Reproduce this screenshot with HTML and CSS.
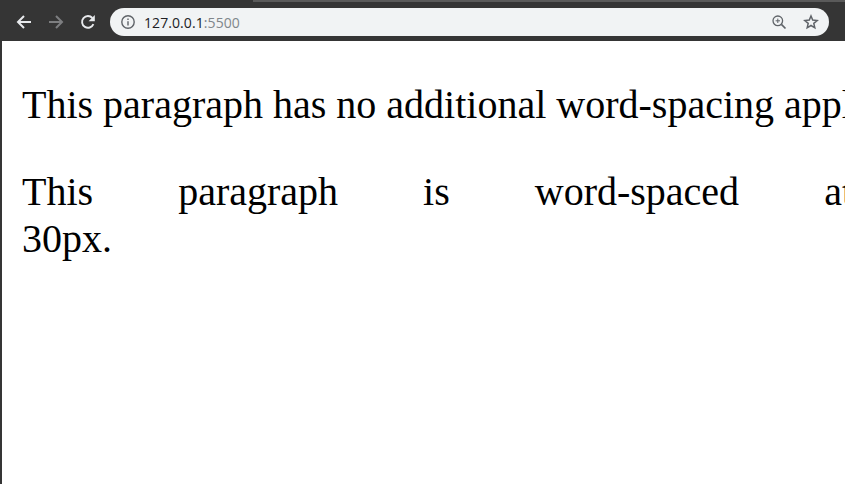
FILE: index.html
```html
<!DOCTYPE html>
<html>
  <head>
    <meta charset="UTF-8">
    <title>word-spacing</title>
    <link rel="stylesheet" href="styles.css">
  </head>
  <body>
    <div class="tab-strip"><div class="tab-edge"></div></div>
    <div class="toolbar">
      <!-- back -->
      <svg class="nav-icon" width="16" height="16" viewBox="0 0 16 16"><path d="M15 8H2M8 2L2 8L8 14" fill="none" stroke="#e8eaed" stroke-width="2"/></svg>
      <!-- forward -->
      <svg class="nav-icon" width="16" height="16" viewBox="0 0 16 16"><path d="M1 8H14M8 2L14 8L8 14" fill="none" stroke="#7d7e80" stroke-width="2"/></svg>
      <!-- reload -->
      <svg class="nav-icon" width="16" height="16" viewBox="0 0 16 16"><path d="M13.4 10.2A5.9 5.9 0 1 1 12.4 4" fill="none" stroke="#e8eaed" stroke-width="1.9"/><path d="M14.8 1V7.2H8.6Z" fill="#e8eaed"/></svg>
      <div class="omnibox">
        <svg class="info-icon" width="14" height="14" viewBox="0 0 14 14"><circle cx="7" cy="7" r="6.2" fill="none" stroke="#5f6368" stroke-width="1.4"/><path d="M7 6.2V10.4M7 3.6V5.1" stroke="#5f6368" stroke-width="1.4"/></svg>
        <span class="host">127.0.0.1</span><span class="port">:5500</span>
        <svg class="zoom-icon" width="16" height="16" viewBox="0 0 16 16"><circle cx="6.8" cy="6.8" r="4.8" fill="none" stroke="#5f6368" stroke-width="1.3"/><path d="M10.4 10.4L14.5 14.5" stroke="#5f6368" stroke-width="1.7"/><path d="M4.6 6.8H9M6.8 4.6V9" stroke="#5f6368" stroke-width="1"/></svg>
        <svg class="star-icon" width="16" height="16" viewBox="0 0 16 16"><path d="M8 2L9.7 6.1L14.2 6.5L10.8 9.4L11.8 13.8L8 11.5L4.2 13.8L5.2 9.4L1.8 6.5L6.3 6.1Z" fill="none" stroke="#5f6368" stroke-width="1.5"/></svg>
      </div>
    </div>
    <div class="page">
      <p class="plain">This paragraph has no additional word-spacing applied.</p>
      <p class="spaced">This paragraph is word-spaced at 30px.</p>
    </div>
  </body>
</html>
```

FILE: styles.css
```css
html, body {
  margin: 0;
  height: 100%;
  overflow: hidden;
}
body {
  display: flex;
  flex-direction: column;
  background: #fff;
  font-family: "Liberation Serif", serif;
  border-left: 2px solid #353535;
  box-sizing: border-box;
}
.tab-strip {
  height: 3px;
  margin-left: -2px;
  background: #353535;
  display: flex;
  justify-content: flex-end;
}
.tab-edge {
  width: 592px;
  height: 2px;
  background: #5a5a5a;
}
.toolbar {
  height: 38px;
  margin-left: -2px;
  background: #353535;
  display: flex;
  align-items: center;
  padding: 0 16px 0 16px;
  gap: 16px;
  box-sizing: border-box;
}
.nav-icon {
  flex: none;
}
.omnibox {
  flex: 1;
  height: 28px;
  margin-left: -2px;
  border-radius: 14px;
  background: #f1f3f4;
  display: flex;
  align-items: center;
  padding: 0 10px 0 11px;
  font-family: "Open Sans", sans-serif;
  font-size: 14px;
  letter-spacing: 0.08px;
}
.info-icon {
  margin-right: 9px;
}
.host {
  color: #202124;
}
.port {
  color: #80868b;
}
.zoom-icon {
  margin-left: auto;
  margin-right: 16px;
}
.page {
  flex: 1;
  padding: 0 20px;
  overflow: hidden;
}
p {
  font-size: 40px;
  line-height: 47px;
  margin: 40px 0;
}
.plain {
  white-space: nowrap;
}
.spaced {
  width: 831px;
  text-align: justify;
  word-spacing: 50px;
}
```
